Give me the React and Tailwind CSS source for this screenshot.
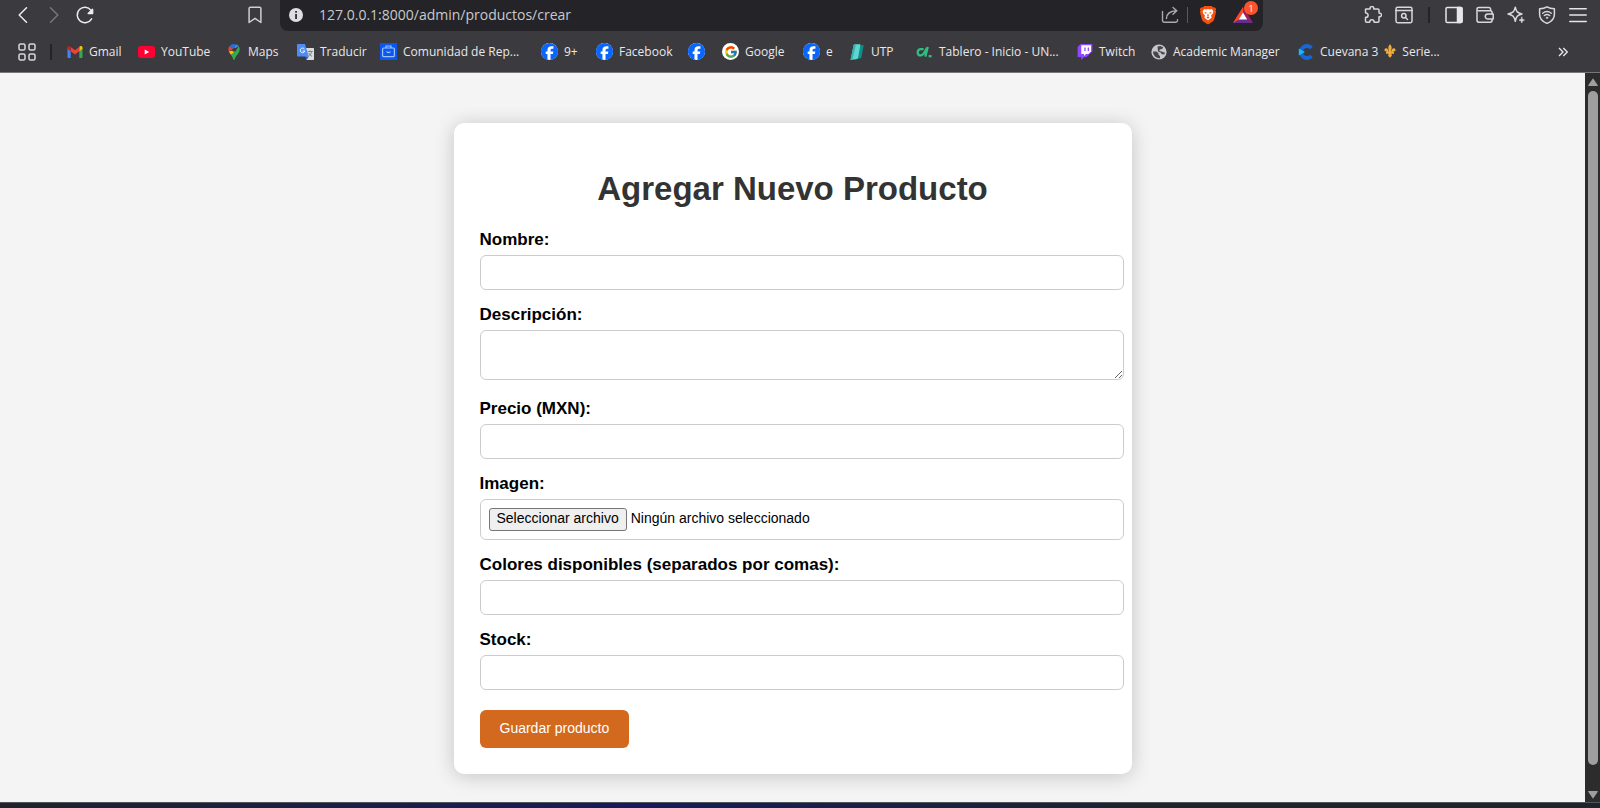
import React from "react";
import { FcGoogle } from "react-icons/fc";
import { FaFacebook } from "react-icons/fa6";

/* ---------- toolbar icons ---------- */

function Line({ children, className = "size-[18px] text-[#d9d9dc]" }) {
  return (
    <svg
      viewBox="0 0 18 18"
      className={`shrink-0 ${className}`}
      fill="none"
      stroke="currentColor"
      strokeWidth="1.5"
      strokeLinecap="round"
      strokeLinejoin="round"
      aria-hidden="true"
    >
      {children}
    </svg>
  );
}

const BackIcon = () => (
  <Line className="size-[18px] text-[#ececee]">
    <path d="M12.500 1.800 5.200 9l7.300 7.200" />
  </Line>
);
const ForwardIcon = () => (
  <Line className="size-[18px] text-[#77767c]">
    <path d="M5.500 1.800 12.800 9l-7.300 7.200" />
  </Line>
);
const ReloadIcon = () => (
  <Line className="size-[18px] text-[#ececee]">
    <path d="M15 4.200A7.700 7.700 0 1 0 15.600 12.800" />
    <path d="M16.600 3.400v4.200h-4.400z" fill="currentColor" />
  </Line>
);
const BookmarkIcon = () => (
  <Line className="size-[18px] text-[#cfcfd3]">
    <path d="M4.400 1.200h9.200c.8 0 1.300.5 1.300 1.300v14L9 12.300l-5.900 4.200v-14c0-.8.5-1.300 1.300-1.300z" />
  </Line>
);
const ShareIcon = () => (
  <Line className="size-[18px] text-[#a9a9ae]">
    <path d="M1.500 5.500v9c0 1 .7 1.700 1.700 1.700h11.600c1 0 1.700-.7 1.700-1.700v-.7" strokeWidth="1.400" />
    <path d="M5.500 12.500c.2-4.500 3.300-7.500 10-7.700M12 1.400l3.800 3.400L12 8.300" strokeWidth="1.400" />
  </Line>
);
const PuzzleIcon = () => (
  <Line>
    <path d="M2.200 2.900h3.600c.3 0 .5-.3.4-.6-.3-1 .5-1.700 1.700-1.700s2 .7 1.700 1.700c-.1.300.1.600.4.600h3.800c.7 0 1.200.5 1.200 1.200v2.700c0 .300.300.500.600.400 1-.3 1.800.5 1.800 1.700s-.8 2-1.800 1.700c-.3-.1-.6.1-.6.4v4.100c0 .7-.5 1.200-1.200 1.200h-3.300c-.3 0-.5-.2-.5-.5 0-1.300-.8-2-2.100-2s-2.100.7-2.100 2c0 .3-.2.5-.5.5H2.700c-.7 0-1.200-.5-1.200-1.200v-3.300c0-.3.200-.5.500-.5 1.400 0 2.100-.8 2.100-2.100S3.400 7.100 2 7.100c-.3 0-.5-.2-.5-.5V3.600c0-.4.300-.7.700-.7z" />
  </Line>
);
const TabSearchIcon = () => (
  <Line>
    <rect x="1" y="1.300" width="16" height="15.400" rx="1.600" />
    <path d="M1 4.600h16" />
    <circle cx="8.800" cy="9.800" r="2.200" />
    <path d="m10.500 11.500 2 2" />
  </Line>
);
const SidebarIcon = () => (
  <Line className="size-[18px] text-[#e6e6e8]">
    <rect x="1" y="1.500" width="16" height="15" rx="1.300" />
    <path d="M12.500 1.500h3.300c.7 0 1.200.5 1.200 1.200v12.600c0 .7-.5 1.200-1.200 1.200h-3.300z" fill="currentColor" />
  </Line>
);
const WalletIcon = () => (
  <Line>
    <path d="M14.600 4.800V3.200c0-1-.7-1.700-1.700-1.700H2.800C1.700 1.500 1 2.200 1 3.200v11.100c0 1.100.8 1.900 1.900 1.900h11.300c1.100 0 1.900-.8 1.900-1.900V6.700c0-1.100-.8-1.900-1.900-1.900H2.400" />
    <path d="M17.200 8h-5.400a2.500 2.500 0 0 0 0 5h5.400z" fill="#3b3a3e" />
  </Line>
);
const SparkleIcon = () => (
  <Line>
    <path d="M8.300 1.200c.9 4.500 2 5.700 6.700 6.800-4.700 1.200-5.800 2.400-6.700 7.300C7.300 10.400 6 9.200 1 8c5-1.100 6.300-2.300 7.300-6.800z" />
    <path d="M14.800 11.200c.4 2 .8 2.500 2.700 2.900-1.900.5-2.300 1-2.700 2.900-.4-1.900-.9-2.400-2.800-2.900 1.900-.4 2.400-.9 2.800-2.900z" fill="currentColor" strokeWidth=".6" />
  </Line>
);
const VpnIcon = () => (
  <Line>
    <path d="M9 .8c2.100 1.300 4.500 1.900 7.400 2v5.400c0 4.300-2.600 7.300-7.400 9.200-4.800-1.900-7.400-4.900-7.400-9.200V2.800C4.500 2.700 6.900 2.100 9 .8z" />
    <path d="M4.700 7.200c2.600-2 6-2 8.600 0M6.300 9.500c1.700-1.200 3.700-1.200 5.400 0" strokeWidth="1.400" />
    <circle cx="9" cy="11.800" r=".8" fill="currentColor" strokeWidth=".6" />
  </Line>
);
const MenuIcon = () => (
  <Line className="size-[18px] text-[#e6e6e8]">
    <path d="M.8 2.700h16.400M.8 9h16.400M.8 15.500h16.400" />
  </Line>
);
const AppsIcon = () => (
  <Line>
    <rect x="1" y="1" width="6" height="6" rx="1.600" />
    <rect x="11" y="1" width="6" height="6" rx="1.600" />
    <rect x="1" y="11" width="6" height="6" rx="1.600" />
    <rect x="11" y="11" width="6" height="6" rx="1.600" />
  </Line>
);

function BatIcon() {
  return (
    <svg viewBox="0 0 20 18" className="h-[18px] w-5" aria-hidden="true">
      <path d="M10 1 0 17h20z" fill="#662d91" />
      <path d="M10 1 0 17l6-3.400L10 7z" fill="#ff4724" />
      <path d="M10 1v6l4 6.600L20 17z" fill="#9e1f63" />
      <path d="M10 6.600 5.800 13.600h8.400z" fill="#fff" />
    </svg>
  );
}

function BraveIcon() {
  return (
    <svg viewBox="0 0 18 20" className="h-5 w-[18px]" aria-hidden="true">
      <path d="M5.200 1h7.600l1.400 1.500 1.500-.2L17.200 4l-.6 1.600.5 1.500-1.900 7.200c-.3 1-.7 1.500-1.500 2.100L9.900 19c-.6.4-1.200.4-1.800 0l-3.800-2.600c-.8-.6-1.200-1.100-1.500-2.100L.9 7.100l.5-1.500L.8 4l1.500-1.700 1.500.2z" fill="#f2500f" />
      <path d="M3.600 6.300 5.300 4l2 .4L9 4l1.700.4 2-.4 1.700 2.300-.6 2.300-1.900 2.200.9 1.600L9 15.600l-3.800-3.200.9-1.600-1.900-2.200z" fill="#fff" />
      <path d="m5 7 2.600.6-.5 1.400zM13 7l-2.600.6.5 1.400zM9 8l-.8 2.800.8.6.8-.6zM7.400 12.300 9 11.600l1.600.7L9 13.700z" fill="#f2500f" />
    </svg>
  );
}

/* ---------- favicons ---------- */

const GmailFavicon = () => (
  <svg viewBox="0 0 16 16" className="size-4" aria-hidden="true">
    <path d="M.5 4v9c0 .6.4 1 1 1h2.200V6.300z" fill="#4285f4" />
    <path d="M12.300 6.300V14h2.200c.6 0 1-.4 1-1V4z" fill="#34a853" />
    <path d="M12.300 2.900v4.400l3.200-2.400V3.600c0-1.500-1.500-2-2.500-1.300z" fill="#fbbc04" />
    <path d="M3.700 7.300V2.900L8 6.200l4.300-3.300v4.400L8 10.600z" fill="#ea4335" />
    <path d="M.5 3.600v1.300l3.200 2.400V2.900L3 2.300C2 1.600.5 2.100.5 3.600z" fill="#c5221f" />
  </svg>
);
const YouTubeFavicon = () => (
  <svg viewBox="0 0 17 16" className="h-4 w-[17px]" aria-hidden="true">
    <rect y="2" width="17" height="12" rx="3" fill="#ff0033" />
    <path d="M6.700 5.500v5L11.200 8z" fill="#fff" />
  </svg>
);
const MapsFavicon = () => (
  <svg viewBox="0 0 16 16" className="size-4" aria-hidden="true">
    <path d="M8 0a5.600 5.600 0 0 0-4.300 2L7 4.800 10.300.5C9.600.2 8.800 0 8 0z" fill="#1a73e8" />
    <path d="M3.700 2C2.300 3.700 2 5.800 2.800 7.600L7 4.800z" fill="#ea4335" />
    <path d="M10.300.5 6.200 5.400a2.300 2.300 0 0 1 3.500-1.300l3-2.200A5.500 5.500 0 0 0 10.300.5z" fill="#4285f4" />
    <path d="M6.100 6.600 2.800 7.600c.5 1.300 1.500 2.300 2.300 3.500L9.800 7A2.300 2.300 0 0 1 6.100 6.600z" fill="#fbbc04" />
    <path d="M12.700 1.900 9.800 7l-4.700 4.100c1.200 1.700 1.700 2.900 2.100 4.200.2.9 1.400.9 1.600 0 .6-2 1.500-3.300 2.800-5 1.900-2.400 3-5.200 1.100-8.400z" fill="#34a853" />
  </svg>
);
const TranslateFavicon = () => (
  <svg viewBox="0 0 17 16" className="h-4 w-[17px]" aria-hidden="true">
    <path d="M7 4h9c.6 0 1 .4 1 1v10c0 .6-.4 1-1 1H9.500z" fill="#dcdcdc" />
    <path d="M10.800 7.500h5M13.300 6.500v1M14.800 7.500c-.5 2-1.700 3.500-3.300 4.500M11.800 9c.7 1.600 1.700 2.600 3.200 3.300" stroke="#6b7780" strokeWidth=".9" fill="none" />
    <path d="M1 0h7l3.800 12.500H1c-.6 0-1-.4-1-1V1c0-.6.4-1 1-1z" fill="#4d8bf5" />
    <path d="M7.400 5A2.300 2.300 0 1 0 7.800 7H5.600" stroke="#fff" strokeWidth="1" fill="none" />
    <path d="m9.500 16 2.300-3.500H8.500z" fill="#3060c0" />
  </svg>
);
const BriefcaseFavicon = () => (
  <svg viewBox="0 0 17 17" className="size-[17px]" aria-hidden="true">
    <rect width="17" height="17" fill="#0b57f0" />
    <g fill="none" stroke="#9cc4ff" strokeWidth="1.200">
      <rect x="2.600" y="5" width="11.800" height="8.600" rx="1" />
      <path d="M6 5V3h5v2M6.500 8.500c.8 1.500 3.200 1.500 4 0" />
    </g>
  </svg>
);
const FacebookFavicon = () => (
  <span className="flex size-[17px] items-center justify-center rounded-full bg-white">
    <FaFacebook className="size-[17px] text-[#0866ff]" aria-hidden="true" />
  </span>
);
const GoogleFavicon = () => (
  <span className="flex size-[17px] items-center justify-center rounded-full bg-white">
    <FcGoogle className="size-[14px]" aria-hidden="true" />
  </span>
);
const UtpFavicon = () => (
  <svg viewBox="0 0 16 16" className="size-4" aria-hidden="true">
    <path d="M8 2.500 13.800 1c.6-.1.900.3.800.8l-2.200 11.500c-.1.500-.4.900-.9 1L5 16z" fill="#0f8f8c" />
    <path d="M4.600 1.300C4.800.6 5.300.3 5.900.3h5.600L9.100 13.600c-.2.800-.7 1.300-1.500 1.500L1.500 16z" fill="#5fd6cf" />
    <path d="M4.600 1.300 1.500 16l1.900-.4L7 .3H5.900c-.6 0-1.100.3-1.300 1z" fill="#2fb3ae" />
  </svg>
);
const CanvasFavicon = () => (
  <svg viewBox="0 0 17 16" className="h-4 w-[17px]" fill="none" stroke="#2bbf83" strokeWidth="2.300" aria-hidden="true">
    <path d="M7.600 5.200H4.700a3 3 0 0 0-3 3.200c0 1.800 1.300 3 3 3 3.300 0 4-4.400 6.600-7.600" />
    <path d="M11.800 3 9.300 12.600" />
    <path d="M12.600 12.200h3" />
  </svg>
);
const TwitchFavicon = () => (
  <svg viewBox="0 0 16 16" className="size-4" aria-hidden="true">
    <path d="M3.600 0 .6 3v10h3.600v3l3-3h2.400l5.800-5.600V0z" fill="#9146ff" />
    <path d="M4.300 1.200v8.900H7v2l2-2h2.300l2.800-2.700V1.200z" fill="#fff" />
    <path d="M7.300 3.600h1.300v3.500H7.300zM10.700 3.600H12v3.500h-1.300z" fill="#9146ff" />
  </svg>
);
const GlobeFavicon = () => (
  <svg viewBox="0 0 16 16" className="size-4" aria-hidden="true">
    <circle cx="8" cy="8" r="7.600" fill="#c8c8ca" />
    <path d="M2 7.500h3.500l2 1.800v1.500L9 12v2.200A6.300 6.300 0 0 1 2 7.500zM6.500 2.500 9.300 2l2.900 1.300-1 1.600-2.400.6-.5 1.600 3 .7 2.700.9-.8 1.800-2.300-.3L9.500 8.500 7 7.600z" fill="#47464b" />
  </svg>
);
const CuevanaFavicon = () => (
  <svg viewBox="0 0 16 16" className="size-4" aria-hidden="true">
    <path d="M13.400 4A6 6 0 1 0 13.400 12" stroke="#1668d8" strokeWidth="3.800" fill="none" />
    <path d="M.8 4.500v7L7 8z" fill="#19b8f2" />
  </svg>
);

function FleurDeLis() {
  return (
    <svg viewBox="0 0 12 14" className="mx-[6px] inline-block h-[14px] w-3 align-[-2px]" fill="#f2ae3d" aria-hidden="true">
      <path d="M6 .3C4.300 2.200 4 3.500 4.900 5.500c.3.800.4 1.700.4 2.500h1.400c0-.8.1-1.700.4-2.500C8 3.500 7.700 2.200 6 .3z" />
      <path d="M4.600 8.300C4.700 5.700 3.500 4 1.900 4.200.4 4.400-.1 6.500 1.100 7.600c.3-1 1.400-1 1.600.7zM7.400 8.300c-.1-2.600 1.100-4.300 2.700-4.100 1.500.2 2 2.300.8 3.400-.3-1-1.400-1-1.600.7z" />
      <path d="M2 7.800h8v2H2zM4.700 9.700h2.600l.6 2L6 13.800l-1.900-2.100zM4.700 3.500h2.600v5H4.700z" />
    </svg>
  );
}

const BOOKMARKS = [
  { label: "Gmail", Icon: GmailFavicon, width: "w-[71px]" },
  { label: "YouTube", Icon: YouTubeFavicon, width: "w-[88px]" },
  { label: "Maps", Icon: MapsFavicon, width: "w-[71px]" },
  { label: "Traducir", Icon: TranslateFavicon, width: "w-[83px]" },
  { label: "Comunidad de Rep...", Icon: BriefcaseFavicon, width: "w-[161px]" },
  { label: "9+", Icon: FacebookFavicon, width: "w-[55px]" },
  { label: "Facebook", Icon: FacebookFavicon, width: "w-[92px]" },
  { label: "", name: "Facebook", Icon: FacebookFavicon, width: "w-[34px]" },
  { label: "Google", Icon: GoogleFavicon, width: "w-[81px]" },
  { label: "e", Icon: FacebookFavicon, width: "w-[46px]" },
  { label: "UTP", Icon: UtpFavicon, width: "w-[67px]" },
  { label: "Tablero - Inicio - UN...", Icon: CanvasFavicon, width: "w-[161px]" },
  { label: "Twitch", Icon: TwitchFavicon, width: "w-[74px]" },
  { label: "Academic Manager", Icon: GlobeFavicon, width: "w-[147px]" },
  { label: <>Cuevana 3<FleurDeLis />Serie...</>, Icon: CuevanaFavicon, width: "w-[161px]" },
];

function ToolButton({ label, children }) {
  return (
    <button type="button" aria-label={label} className="shrink-0">
      {children}
    </button>
  );
}

function AddressRow() {
  return (
    <div className="flex h-8 items-start">
      <div className="flex h-[31px] w-[280px] shrink-0 items-center gap-[13px] pr-4 pb-px pl-[14px]">
        <ToolButton label="Atrás"><BackIcon /></ToolButton>
        <ToolButton label="Adelante"><ForwardIcon /></ToolButton>
        <ToolButton label="Recargar"><ReloadIcon /></ToolButton>
        <span className="flex-1" />
        <ToolButton label="Guardar marcador"><BookmarkIcon /></ToolButton>
      </div>
      <div className="flex h-[31px] min-w-0 flex-1 items-center rounded-b-lg bg-[#242328] pr-2 pb-px pl-2">
        <svg viewBox="0 0 16 16" className="size-4 shrink-0" aria-hidden="true">
          <circle cx="8" cy="8" r="7" fill="#dedee0" />
          <path d="M7.200 7h1.700v5H7.200zM7.200 4h1.700v1.700H7.200z" fill="#242328" />
        </svg>
        <input
          type="text"
          aria-label="Dirección"
          defaultValue="127.0.0.1:8000/admin/productos/crear"
          className="ml-[15px] min-w-0 flex-1 bg-transparent text-sm leading-5 text-[#c9c9cc] outline-none"
        />
        <div className="flex items-center">
          <ToolButton label="Compartir"><ShareIcon /></ToolButton>
          <span className="mr-[11px] ml-2 h-4 w-px bg-[#5a595f]" />
          <ToolButton label="Brave Shields"><BraveIcon /></ToolButton>
          <button type="button" aria-label="Brave Rewards" className="relative mr-[2px] ml-4">
            <BatIcon />
            <span className="absolute -top-[5px] left-[11px] flex size-[14px] items-center justify-center rounded-full bg-[#fb542b] text-[9px] leading-none text-white">
              1
            </span>
          </button>
        </div>
      </div>
      <div className="flex h-[31px] w-[337px] shrink-0 items-center justify-end gap-[13px] pr-[13px] pb-px">
        <ToolButton label="Extensiones"><PuzzleIcon /></ToolButton>
        <ToolButton label="Buscar pestañas"><TabSearchIcon /></ToolButton>
        <span className="mx-0.5 h-4 w-0.5 bg-[#242328]" />
        <ToolButton label="Barra lateral"><SidebarIcon /></ToolButton>
        <ToolButton label="Cartera"><WalletIcon /></ToolButton>
        <ToolButton label="Leo AI"><SparkleIcon /></ToolButton>
        <ToolButton label="VPN"><VpnIcon /></ToolButton>
        <ToolButton label="Menú"><MenuIcon /></ToolButton>
      </div>
    </div>
  );
}

function BookmarksBar() {
  return (
    <nav aria-label="Marcadores" className="flex h-[39px] items-center pr-8 pl-[18px] text-xs leading-4 text-[#e8e8ea]">
      <ToolButton label="Aplicaciones"><AppsIcon /></ToolButton>
      <span className="mr-[15px] ml-[14px] h-4 w-0.5 shrink-0 bg-[#242328]" />
      <div className="flex min-w-0 flex-1 items-center overflow-hidden">
        {BOOKMARKS.map(({ label, name, Icon, width }, i) => (
          <a key={i} href="#" aria-label={name} className={`flex shrink-0 items-center gap-[6px] whitespace-nowrap ${width}`}>
            <Icon />
            {label && <span>{label}</span>}
          </a>
        ))}
      </div>
      <button type="button" aria-label="Más marcadores">
        <svg viewBox="0 0 10 10" className="size-[10px]" fill="none" stroke="currentColor" strokeWidth="1.400" aria-hidden="true">
          <path d="m1 1 4 4-4 4M5.300 1l4 4-4 4" />
        </svg>
      </button>
    </nav>
  );
}

/* ---------- product form ---------- */

const FIELD = "w-full rounded-md border border-[#ccc] bg-white px-2 text-sm text-black";

function Field({ id, label, className = "mb-[15px]", children }) {
  return (
    <div className={className}>
      <label htmlFor={id} className="mb-[5px] block text-[17px] leading-5 font-bold text-black">
        {label}
      </label>
      {children}
    </div>
  );
}

function ProductForm() {
  return (
    <form
      onSubmit={(e) => e.preventDefault()}
      className="mx-auto w-full max-w-[678px] rounded-[10px] bg-white pt-[47px] pr-2 pb-[26px] pl-[26px] shadow-[0_2px_20px_rgba(0,0,0,0.2)]"
    >
      <h1 className="mb-[22px] pr-[18px] text-center text-[33px] leading-[38px] font-bold text-[#333]">
        Agregar Nuevo Producto
      </h1>
      <Field id="nombre" label="Nombre:">
        <input id="nombre" type="text" className={`${FIELD} block h-[35px]`} />
      </Field>
      <Field id="descripcion" label="Descripción:" className="mb-[19px]">
        <textarea id="descripcion" className={`${FIELD} block h-[50px] resize-y py-2`} />
      </Field>
      <Field id="precio" label="Precio (MXN):">
        <input id="precio" type="text" inputMode="decimal" className={`${FIELD} block h-[35px]`} />
      </Field>
      <Field id="imagen" label="Imagen:">
        <div className={`${FIELD} relative flex h-[41px] items-start gap-1 pt-2`}>
          <span aria-hidden="true" className="rounded-[3px] border border-[#767676] bg-[#efefef] px-[7px] pb-[2px] leading-[19px]">
            Seleccionar archivo
          </span>
          <span className="pt-px leading-[19px]">Ningún archivo seleccionado</span>
          <input id="imagen" type="file" accept="image/*" className="absolute inset-0 size-full cursor-pointer opacity-0" />
        </div>
      </Field>
      <Field id="colores" label="Colores disponibles (separados por comas):">
        <input id="colores" type="text" className={`${FIELD} block h-[35px]`} />
      </Field>
      <Field id="stock" label="Stock:" className="mb-5">
        <input id="stock" type="text" inputMode="numeric" className={`${FIELD} block h-[35px]`} />
      </Field>
      <button type="submit" className="block rounded-md bg-[#d2691e] px-5 pt-2 pb-[10px] text-sm leading-5 text-white">
        Guardar producto
      </button>
    </form>
  );
}

function Scrollbar() {
  return (
    <div aria-hidden="true" className="flex w-[15px] shrink-0 flex-col items-center bg-[#2c2c2c] pt-[5px] pb-[3px]">
      <svg viewBox="0 0 10 8" className="h-2 w-[10px]" fill="#9f9f9f"><path d="M5 .3 9.800 7.200q.2.800-.6.800H.8Q0 8 .2 7.200z" /></svg>
      <span className="mt-[5px] mb-[26px] w-[10px] flex-1 rounded-full bg-[#9f9f9f]" />
      <svg viewBox="0 0 10 8" className="h-2 w-[10px]" fill="#9f9f9f"><path d="M5 7.700.2.800Q0 0 .8 0h8.400q.8 0 .6.800z" /></svg>
    </div>
  );
}

export default function App() {
  return (
    <div className="flex min-h-screen flex-col bg-[#f4f4f4]">
      <header className="border-b border-[#77767a] bg-[#3b3a3e] pb-px font-['Open_Sans','Noto_Sans',sans-serif]">
        <AddressRow />
        <BookmarksBar />
      </header>
      <div className="flex flex-1">
        <main className="min-w-0 flex-1 px-4 pt-[50px] pb-7 font-['Liberation_Sans',Arial,sans-serif]">
          <ProductForm />
        </main>
        <Scrollbar />
      </div>
      <footer className="h-[6px] border-t border-[#50545c] bg-linear-to-r from-[#22202c] via-[#141a5c] via-40% to-[#1e222c] to-72%" />
    </div>
  );
}
